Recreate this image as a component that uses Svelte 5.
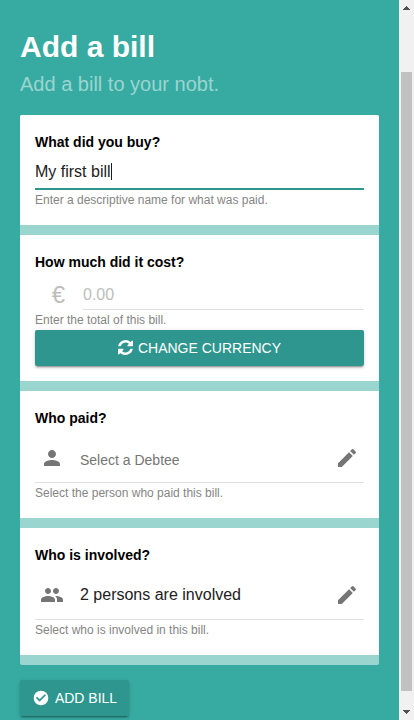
<script>
  const pencil = 'M3 17.25V21h3.75L17.81 9.94l-3.75-3.75L3 17.25zM20.71 7.04a1 1 0 0 0 0-1.41l-2.34-2.34a1 1 0 0 0-1.41 0l-1.83 1.83 3.75 3.75 1.83-1.83z';
  const person = 'M12 12c2.21 0 4-1.79 4-4s-1.79-4-4-4-4 1.79-4 4 1.79 4 4 4zm0 2c-2.67 0-8 1.34-8 4v2h16v-2c0-2.66-5.33-4-8-4z';
  const group = 'M16 11c1.66 0 2.99-1.34 2.99-3S17.66 5 16 5s-3 1.34-3 3 1.34 3 3 3zm-8 0c1.66 0 2.99-1.34 2.99-3S9.66 5 8 5 5 6.34 5 8s1.34 3 3 3zm0 2c-2.33 0-7 1.17-7 3.5V19h14v-2.5c0-2.33-4.67-3.5-7-3.5zm8 0c-.29 0-.62.02-.97.05 1.16.84 1.97 1.97 1.97 3.45V19h6v-2.5c0-2.33-4.67-3.5-7-3.5z';
  const pickers = [
    { title: 'Who paid?', icon: person, value: 'Select a Debtee', chosen: false, help: 'Select the person who paid this bill.' },
    { title: 'Who is involved?', icon: group, value: '2 persons are involved', chosen: true, help: 'Select who is involved in this bill.' }
  ];
</script>

<div class="window">
  <main>
    <h1>Add a bill</h1>
    <p class="subtitle">Add a bill to your nobt.</p>

    <div class="sections">
      <section class="name">
        <h2>What did you buy?</h2>
        <div class="field">My first bill<span class="caret"></span></div>
        <p class="help">Enter a descriptive name for what was paid.</p>
      </section>

      <section class="cost">
        <h2>How much did it cost?</h2>
        <div class="amount">
          <span class="currency">€</span>
          <span class="total">0.00</span>
        </div>
        <p class="help">Enter the total of this bill.</p>
        <button class="wide">
          <svg width="15" height="15" viewBox="0 0 1536 1536">
            <path fill="currentColor" d="M1511 928q0 5-1 7-64 268-268 434.500t-478 166.500q-146 0-282.500-55t-243.500-157l-129 129q-19 19-45 19t-45-19-19-45v-448q0-26 19-45t45-19h448q26 0 45 19t19 45-19 45l-137 137q71 66 161 102t187 36q134 0 250-65t186-179q11-17 53-117 8-23 30-23h192q13 0 22.500 9.500t9.500 22.500zm25-800v448q0 26-19 45t-45 19h-448q-26 0-45-19t-19-45 19-45l138-138q-148-137-349-137-134 0-250 65t-186 179q-11 17-53 117-8 23-30 23h-199q-13 0-22.500-9.500t-9.500-22.500v-7q65-268 270-434.500t480-166.500q146 0 284 55.500t245 156.500l130-129q19-19 45-19t45 19 19 45z" />
          </svg>
          <span>CHANGE CURRENCY</span>
        </button>
      </section>

      {#each pickers as item}
        <section class="pick">
          <h2>{item.title}</h2>
          <div class="row">
            <svg width="24" height="24" viewBox="0 0 24 24"><path fill="currentColor" d={item.icon} /></svg>
            <span class="value" class:chosen={item.chosen}>{item.value}</span>
            <svg width="24" height="24" viewBox="0 0 24 24"><path fill="currentColor" d={pencil} /></svg>
          </div>
          <p class="help">{item.help}</p>
        </section>
      {/each}
    </div>

    <button class="submit">
      <svg width="16" height="16" viewBox="0 0 24 24">
        <path fill="currentColor" d="M12 1a11 11 0 1 0 0 22 11 11 0 0 0 0-22zm-2 16.500l-5.500-5.500 1.800-1.800 3.700 3.700 7.700-7.700 1.800 1.800z" />
      </svg>
      <span>ADD BILL</span>
    </button>
  </main>

  <div class="scrollbar">
    <svg width="15" height="15" viewBox="0 0 15 15" shape-rendering="crispEdges"><path fill="#505050" d="M4 10h7v-1h-1v-1h-1v-1h-1v-1h-1v1h-1v1h-1v1h-1z" /></svg>
    <div class="track"><div class="thumb"></div></div>
    <svg width="15" height="15" viewBox="0 0 15 15" shape-rendering="crispEdges"><path fill="#505050" d="M4 5h7v1h-1v1h-1v1h-1v1h-1v-1h-1v-1h-1v-1h-1z" /></svg>
  </div>
</div>

<style>
  .window {
    display: flex;
    height: 720px;
    overflow: hidden;
    font-family: "Liberation Sans", Arial, sans-serif;
  }
  main {
    flex: 1;
    padding: 29px 20px 0;
    box-sizing: border-box;
    background: #37aba2;
  }
  h1, h2, p { margin: 0; }
  h1 {
    font-size: 30px;
    line-height: 36px;
    color: #fff;
  }
  .subtitle {
    margin-top: 7px;
    font-size: 20px;
    line-height: 24px;
    color: #9bd5d0;
  }
  .sections {
    display: flex;
    flex-direction: column;
    gap: 10px;
    margin-top: 19px;
    padding-bottom: 10px;
    border-radius: 2px;
    overflow: hidden;
    background: #9bd5d0;
  }
  section {
    box-sizing: border-box;
    padding: 19px 15px 0;
    background: #fff;
  }
  .name { height: 110px; }
  .cost { height: 146px; }
  .pick { height: 127px; }
  h2 {
    font-size: 14px;
    line-height: 16px;
    color: #000;
  }
  .help {
    margin-top: 3px;
    font-size: 12px;
    line-height: 15px;
    color: #858585;
  }
  .field {
    display: flex;
    align-items: center;
    box-sizing: border-box;
    height: 40px;
    padding-top: 5px;
    border-bottom: 2px solid #2e968e;
    font-size: 16px;
    color: #212121;
  }
  .caret {
    width: 1px;
    height: 17px;
    background: #212121;
  }
  .amount {
    display: flex;
    height: 40px;
    color: #bdbdbd;
  }
  .currency {
    box-sizing: border-box;
    width: 48px;
    padding-right: 1px;
    text-align: center;
    font-size: 24px;
    line-height: 50px;
  }
  .total {
    flex: 1;
    box-sizing: border-box;
    border-bottom: 1px solid #e0e0e0;
    font-size: 16px;
    line-height: 49px;
  }
  button {
    display: flex;
    align-items: center;
    justify-content: center;
    height: 36px;
    padding: 0;
    border: 0;
    border-radius: 2px;
    background: #2e968e;
    color: #fff;
    font: 14px "Liberation Sans", Arial, sans-serif;
    box-shadow: 0 2px 2px rgba(0, 0, 0, .14), 0 3px 1px -2px rgba(0, 0, 0, .2), 0 1px 5px rgba(0, 0, 0, .12);
  }
  .wide {
    width: 100%;
    margin-top: 2px;
    gap: 5px;
  }
  .wide svg { margin-bottom: 1px; }
  .submit {
    width: 109px;
    margin-top: 15px;
    padding-left: 1px;
    gap: 6px;
  }
  .row {
    display: flex;
    align-items: center;
    height: 57px;
    box-sizing: border-box;
    padding: 7px 5px 0;
    border-bottom: 1px solid #e0e0e0;
    color: #757575;
  }
  .value {
    flex: 1;
    margin-left: 16px;
    padding-top: 5px;
    font-size: 14px;
  }
  .value.chosen {
    padding-top: 0;
    font-size: 16px;
    color: #212121;
  }
  .scrollbar {
    display: flex;
    flex-direction: column;
    width: 15px;
    background: #f1f1f1;
  }
  .scrollbar svg { display: block; }
  .track {
    flex: 1;
    padding: 57px 2px 0;
  }
  .thumb {
    height: 619px;
    width: 11px;
    background: #c1c1c1;
  }
</style>
